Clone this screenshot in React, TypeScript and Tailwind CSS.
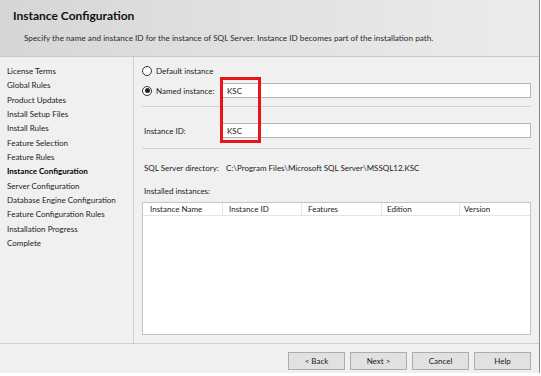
import React from "react";

const navItems = [
  "License Terms",
  "Global Rules",
  "Product Updates",
  "Install Setup Files",
  "Install Rules",
  "Feature Selection",
  "Feature Rules",
  "Instance Configuration",
  "Server Configuration",
  "Database Engine Configuration",
  "Feature Configuration Rules",
  "Installation Progress",
  "Complete",
];

function Radio({ checked }: { checked?: boolean }) {
  return (
    <span className="relative inline-flex h-[10px] w-[10px] items-center justify-center rounded-full border border-[#333] bg-white">
      {checked && <span className="h-[5px] w-[5px] rounded-full bg-[#222]" />}
    </span>
  );
}

export default function App() {
  const font = { fontFamily: "Lato, 'Noto Sans', Arial, sans-serif" };
  return (
    <div className="relative h-[376px] w-[541px] overflow-hidden bg-white text-[8px] text-[#1b1b1b]" style={font}>
      <div className="flex h-[373px] w-[540px] flex-col border-r border-[#8a8a8a] bg-[#f0f0f0]">
        {/* Header */}
        <div className="h-[57px] shrink-0 border-b border-[#c9c9c9] bg-gradient-to-r from-[#d6d6d6] via-[#e2e2e2] to-[#ececec]">
          <div className="pl-[13px] pt-[9px] text-[12px] font-bold leading-[14px] text-[#111]">Instance Configuration</div>
          <div className="pl-[24px] pt-[9px] text-[8.2px] leading-[12px] text-[#2a2a2a]">
            Specify the name and instance ID for the instance of SQL Server. Instance ID becomes part of the installation path.
          </div>
        </div>

        {/* Middle */}
        <div className="flex h-[286px] shrink-0">
          <div className="w-[134px] shrink-0 border-r border-[#cfcfcf] pl-[7px] pt-[7px]">
            {navItems.map((n) => (
              <div
                key={n}
                className={`h-[14.33px] whitespace-nowrap leading-[14px] ${n === "Instance Configuration" ? "font-bold text-black" : ""}`}
              >
                {n}
              </div>
            ))}
          </div>

          <div className="relative flex flex-1 flex-col pl-[8px] pr-[8px] pt-[7px]">
            <div className="flex h-[14px] items-center gap-[4px]">
              <Radio />
              <span>Default instance</span>
            </div>
            <div className="mt-[5px] flex h-[15px] items-center">
              <div className="flex w-[80px] items-center gap-[4px]">
                <Radio checked />
                <span>Named instance:</span>
              </div>
              <div className="flex h-[15px] flex-1 items-center border border-[#b4b4b4] bg-white pl-[4px]">KSC</div>
            </div>
            <div className="mt-[8px] h-px bg-[#d2d2d2]" />
            <div className="mt-[16px] flex h-[15px] items-center">
              <div className="w-[80px] pl-[2px]">Instance ID:</div>
              <div className="flex h-[15px] flex-1 items-center border border-[#b4b4b4] bg-white pl-[4px]">KSC</div>
            </div>
            <div className="mt-[10px] h-px bg-[#d2d2d2]" />
            <div className="mt-[12px] flex h-[14px] items-center">
              <div className="w-[84px] pl-[2px]">SQL Server directory:</div>
              <div>C:\Program Files\Microsoft SQL Server\MSSQL12.KSC</div>
            </div>
            <div className="mt-[9px] flex h-[14px] items-center pl-[2px]">Installed instances:</div>
            <div className="mt-[4px] mb-[8px] flex-1 border border-[#c4c4c4] bg-white">
              <div className="flex h-[13px] items-center border-b border-[#e4e4e4]">
                <div className="w-[80px] border-r border-[#e4e4e4] pl-[7px]">Instance Name</div>
                <div className="w-[79px] border-r border-[#e4e4e4] pl-[6px]">Instance ID</div>
                <div className="w-[80px] border-r border-[#e4e4e4] pl-[6px]">Features</div>
                <div className="w-[78px] border-r border-[#e4e4e4] pl-[5px]">Edition</div>
                <div className="flex-1 pl-[4px]">Version</div>
              </div>
            </div>

            <div className="absolute left-[86px] top-[20px] h-[66px] w-[41px] border-[3px] border-[#e8141c]" />
          </div>
        </div>

        {/* Footer */}
        <div className="flex flex-1 items-start justify-end gap-[5px] border-t border-[#cfcfcf] pr-[8px] pt-[8px]">
          {["< Back", "Next >", "Cancel", "Help"].map((b) => (
            <div
              key={b}
              className="flex h-[18px] w-[57px] items-center justify-center border border-[#adadad] bg-[#e1e1e1]"
            >
              {b}
            </div>
          ))}
        </div>
      </div>
    </div>
  );
}
